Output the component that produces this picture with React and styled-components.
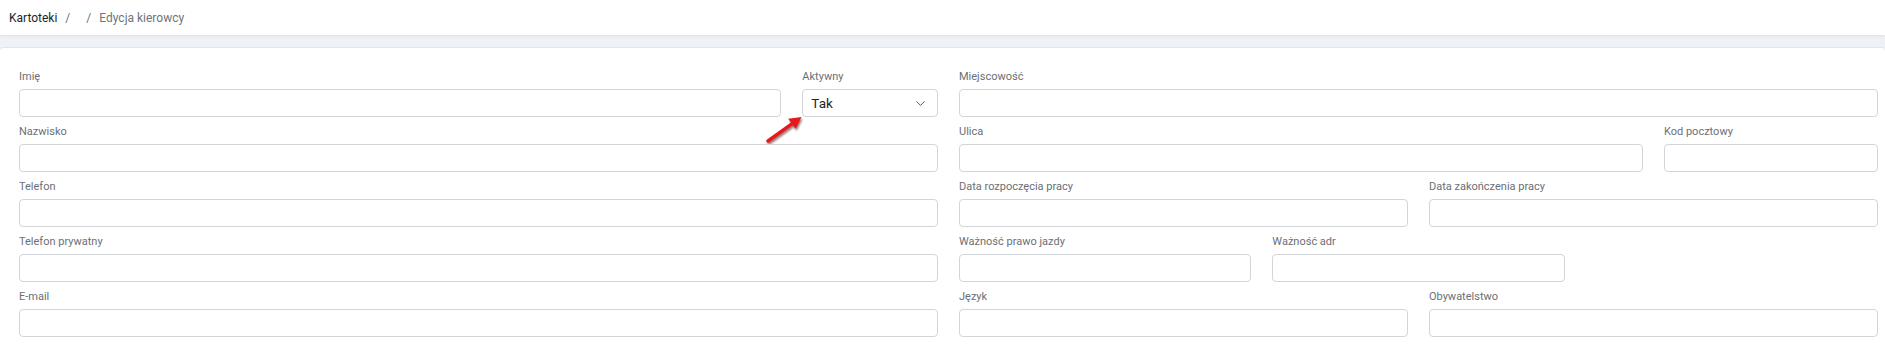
import React from 'react';
import styled, { createGlobalStyle } from 'styled-components';
import { ChevronDown } from 'lucide-react';

const GlobalStyle = createGlobalStyle`
    html, body {
        margin: 0;
        padding: 0;
        background: #eef1f5;
        font-family: Roboto, "Liberation Sans", sans-serif;
        overflow: hidden;
    }
    * {
        box-sizing: border-box;
    }
`;

const Header = styled.div`
    height: 35px;
    background: #ffffff;
    display: flex;
    align-items: center;
    padding-left: 9px;
    box-shadow: 0 1px 3px rgba(0, 0, 0, 0.08);
    position: relative;
    z-index: 1;
`;

const Breadcrumb = styled.ol`
    display: flex;
    list-style: none;
    margin: 0;
    padding: 0;
    font-size: 12px;

    & > li + li {
        padding-left: 8px;
    }
    & > li + li::before {
        content: '/';
        color: #6c757d;
        padding-right: 8px;
    }
`;

const Crumb = styled.li`
    color: ${({ $active }) => ($active ? '#6c757d' : '#212529')};
`;

const Page = styled.div`
    padding-top: 12px;
`;

const Card = styled.div`
    background: #ffffff;
    border-top: 1px solid #e2e5ea;
    border-radius: 4px 4px 0 0;
    padding: 21px 7px 9px 19px;
    min-height: 299px;
`;

const Row = styled.div`
    display: grid;
    grid-template-columns: repeat(12, minmax(0, 1fr));
    column-gap: 21px;
`;

const Col = styled.div`
    grid-column: span ${({ $span }) => $span};
    min-width: 0;
`;

const Field = styled.div`
    position: relative;
    margin-bottom: 7px;
`;

const Label = styled.label`
    display: block;
    font-size: 11px;
    line-height: 16px;
    color: #6b6f75;
    margin-bottom: 4px;
    white-space: nowrap;
`;

const Input = styled.input`
    display: block;
    width: 100%;
    height: 28px;
    border: 1px solid #d2d5da;
    border-radius: 4px;
    background: #ffffff;
    padding: 0 8px;
    font-family: inherit;
    font-size: 13px;
    outline: none;
`;

const Select = styled.div`
    height: 28px;
    border: 1px solid #d2d5da;
    border-radius: 4px;
    background: #ffffff;
    display: flex;
    align-items: center;
    justify-content: space-between;
    padding: 0 9px 0 8px;
    font-size: 13.5px;
    color: #212529;
`;

const Chevron = styled(ChevronDown)`
    color: #555a60;
`;

const Pointer = styled.svg`
    position: absolute;
    left: -38px;
    top: 46px;
    overflow: visible;
    filter: drop-shadow(1px 2px 1px rgba(60, 0, 0, 0.55));
`;

const TextField = ({ label }) => (
    <Field>
        <Label>{label}</Label>
        <Input type="text" />
    </Field>
);

const App = () => {
    return (
        <>
            <GlobalStyle />
            <Header>
                <Breadcrumb>
                    <Crumb>Kartoteki</Crumb>
                    <Crumb />
                    <Crumb $active>Edycja kierowcy</Crumb>
                </Breadcrumb>
            </Header>
            <Page>
                <Card>
                    <Row>
                        <Col $span={6}>
                            <Row>
                                <Col $span={10}>
                                    <TextField label="Imię" />
                                </Col>
                                <Col $span={2}>
                                    <Field>
                                        <Label>Aktywny</Label>
                                        <Select>
                                            <span>Tak</span>
                                            <Chevron size={15} strokeWidth={1.6} />
                                        </Select>
                                        <Pointer width="40" height="30" viewBox="0 0 40 30">
                                            <line x1="4" y1="26" x2="28.5" y2="8.4" stroke="#e8171b" strokeWidth="3.4" strokeLinecap="round" />
                                            <polygon points="37.5,2 31.6,13.8 24.2,3.8" fill="#e8171b" />
                                        </Pointer>
                                    </Field>
                                </Col>
                                <Col $span={12}>
                                    <TextField label="Nazwisko" />
                                </Col>
                                <Col $span={12}>
                                    <TextField label="Telefon" />
                                </Col>
                                <Col $span={12}>
                                    <TextField label="Telefon prywatny" />
                                </Col>
                                <Col $span={12}>
                                    <TextField label="E-mail" />
                                </Col>
                            </Row>
                        </Col>
                        <Col $span={6}>
                            <Row>
                                <Col $span={12}>
                                    <TextField label="Miejscowość" />
                                </Col>
                                <Col $span={9}>
                                    <TextField label="Ulica" />
                                </Col>
                                <Col $span={3}>
                                    <TextField label="Kod pocztowy" />
                                </Col>
                                <Col $span={6}>
                                    <TextField label="Data rozpoczęcia pracy" />
                                </Col>
                                <Col $span={6}>
                                    <TextField label="Data zakończenia pracy" />
                                </Col>
                                <Col $span={4}>
                                    <TextField label="Ważność prawo jazdy" />
                                </Col>
                                <Col $span={4}>
                                    <TextField label="Ważność adr" />
                                </Col>
                                <Col $span={4} />
                                <Col $span={6}>
                                    <TextField label="Język" />
                                </Col>
                                <Col $span={6}>
                                    <TextField label="Obywatelstwo" />
                                </Col>
                            </Row>
                        </Col>
                    </Row>
                </Card>
            </Page>
        </>
    );
};

export default App;
